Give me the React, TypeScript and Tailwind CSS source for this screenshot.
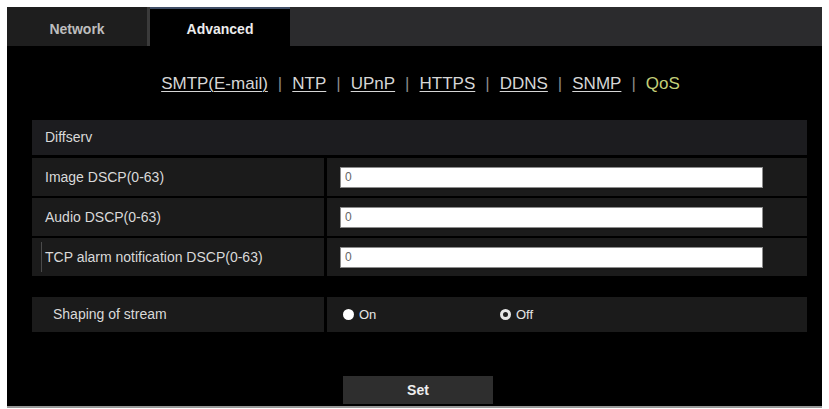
import { useState } from 'react';

const links = ['SMTP(E-mail)', 'NTP', 'UPnP', 'HTTPS', 'DDNS', 'SNMP'];

const dscpRows = [
  { id: 'image', label: 'Image DSCP(0-63)' },
  { id: 'audio', label: 'Audio DSCP(0-63)' },
  { id: 'tcp', label: 'TCP alarm notification DSCP(0-63)' },
];

function Radio({ checked, label, onClick }: { checked: boolean; label: string; onClick: () => void }) {
  return (
    <button type="button" onClick={onClick} className="flex items-center gap-[5px] text-[13px] text-[#e6e6e6]">
      {checked ? (
        <span className="w-[11px] h-[11px] rounded-full bg-white" />
      ) : (
        <span className="w-[11px] h-[11px] rounded-full border-[3px] border-[#e8e8e8] bg-[#222]" />
      )}
      <span>{label}</span>
    </button>
  );
}

export default function App() {
  const [values, setValues] = useState<Record<string, string>>({ image: '0', audio: '0', tcp: '0' });
  const [shaping, setShaping] = useState<'on' | 'off'>('on');

  return (
    <div className="w-[829px] h-[409px] bg-white pt-[7px] pl-[7px]" style={{ fontFamily: '"Liberation Sans", Arial, sans-serif' }}>
      <div className="w-[815px] h-[401px] bg-black flex flex-col border-b-2 border-[#9a9a9a]">
        {/* tabs */}
        <div className="h-[39px] bg-[#2b2b2d] flex shrink-0">
          <div className="w-[140px] bg-[#1e1e1e] flex items-center justify-center pt-[5px] text-[14px] font-bold text-[#bdbdbd]">
            Network
          </div>
          <div className="w-[3px] bg-[#3a3a3a]" />
          <div className="w-[140px] bg-black border-t-2 border-[#3f4e66] flex items-center justify-center pt-[3px] text-[14px] font-bold text-[#ececec]">
            Advanced
          </div>
        </div>

        {/* sub navigation */}
        <div className="h-[74px] flex items-center justify-center pl-[12px] pt-[2px] text-[17px] text-[#d6d6d6] shrink-0">
          {links.map((l) => (
            <span key={l} className="flex items-center">
              <a className="underline underline-offset-2 decoration-1">{l}</a>
              <span className="mx-[10px] text-[#8a8a8a]">|</span>
            </span>
          ))}
          <span className="text-[#c3cf78]">QoS</span>
        </div>

        <div className="pl-[25px] pr-[15px] flex flex-col text-[14px] text-[#d9d9d9]">
          <div className="h-[35px] bg-[#1c1c1f] flex items-center pl-[13px]">Diffserv</div>

          <div className="flex flex-col gap-[2px] mt-[3px]">
            {dscpRows.map((r) => (
              <div key={r.id} className="h-[38px] flex gap-[3px]">
                <div className="w-[292px] bg-[#1b1b1b] flex items-center pl-[13px] relative">
                  {r.id === 'tcp' && <span className="absolute left-[9px] top-[4px] bottom-[4px] w-px bg-[#4a4a4a]" />}
                  {r.label}
                </div>
                <div className="flex-1 bg-[#1b1b1b] flex items-center pl-[13px]">
                  <input
                    type="text"
                    value={values[r.id]}
                    onChange={(e) => setValues({ ...values, [r.id]: e.target.value })}
                    className="w-[423px] h-[21px] bg-white border border-[#8c8c8c] px-[4px] text-[12px] text-[#666] outline-none"
                  />
                </div>
              </div>
            ))}
          </div>

          <div className="h-[35px] flex gap-[3px] mt-[21px]">
            <div className="w-[292px] bg-[#1b1b1b] flex items-center pl-[21px]">Shaping of stream</div>
            <div className="flex-1 bg-[#1b1b1b] flex items-center pl-[16px]">
              <div className="w-[157px]">
                <Radio checked={shaping === 'on'} label="On" onClick={() => setShaping('on')} />
              </div>
              <Radio checked={shaping === 'off'} label="Off" onClick={() => setShaping('off')} />
            </div>
          </div>

          <div className="flex justify-start pl-[311px] mt-[44px]">
            <button type="button" className="w-[150px] h-[28px] bg-[#2e2e2e] text-[14px] font-bold text-[#eeeeee]">
              Set
            </button>
          </div>
        </div>
      </div>
    </div>
  );
}
